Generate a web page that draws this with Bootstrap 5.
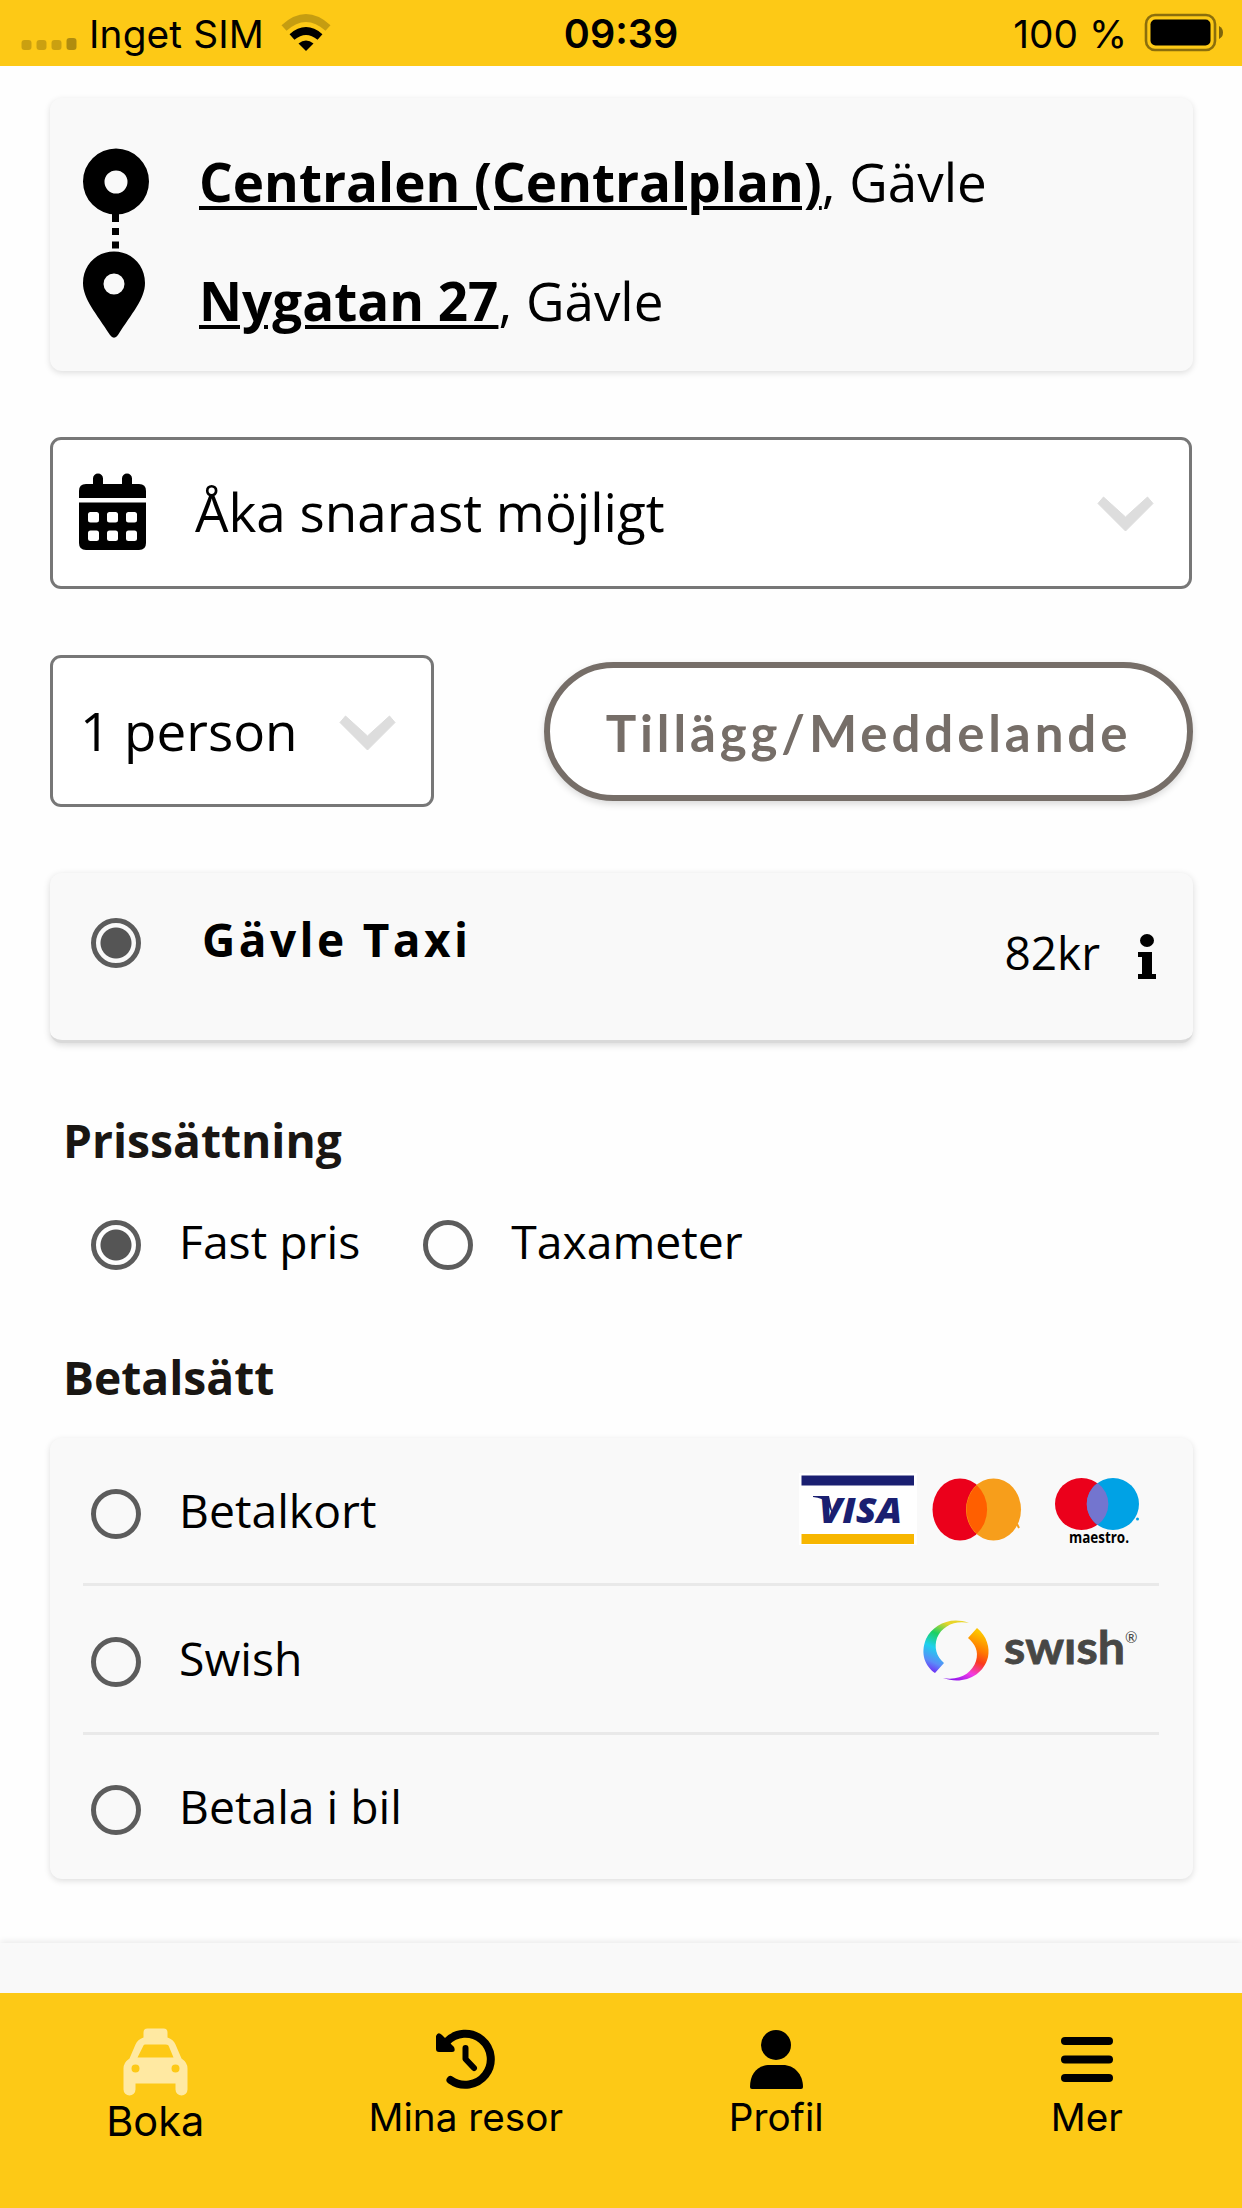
<!DOCTYPE html>
<html lang="sv">
<head>
<meta charset="utf-8">
<meta name="viewport" content="width=device-width, initial-scale=1">
<title>Boka taxi</title>
<link href="https://cdn.jsdelivr.net/npm/bootstrap@5.3.0/dist/css/bootstrap.min.css" rel="stylesheet">
<style>
  :root { --brand: #fdc916; --panel: #f9f9f9; }
  body { font-family: "Open Sans", sans-serif; color: #000; background: #fefefe; width: 1242px; height: 2208px; overflow: hidden; }
  svg { display: block; flex: none; overflow: visible; }
  .ui { font-family: Inter, sans-serif; }
  .statusbar { height: 66px; background: var(--brand); font-size: 38.8px; line-height: 66px; padding: 2px 18px 0 21px; }
  .statusbar svg { margin-top: -2px; }
  .statusbar .clock { font-weight: 600; font-size: 39.5px; margin-right: 3px; }
  .sim { margin-left: 12px; letter-spacing: .15px; }
  .sym { margin-left: 17px; }
  .side { flex: 1 1 0; }
  .shell { padding: 32px 49px 0 50px; }
  .panel { background: var(--panel); border-radius: 12px; box-shadow: 0 2px 6px rgba(0,0,0,.13); }
  .route { height: 273px; padding: 50px 33px 0; margin-bottom: 66px; }
  .stops { padding-top: 4px; margin-left: 49px; font-size: 53px; line-height: 60px; }
  .stops div + div { margin-top: 59px; }
  .stops a { color: #000; font-weight: 700; text-decoration-thickness: 4px; text-underline-offset: 4px; }
  .picker { border: 3px solid #777; border-radius: 11px; height: 152px; background: #fff; font-size: 53px; line-height: 60px; white-space: nowrap; }
  .picker .chev { margin-top: 3px; }
  .when { padding: 0 36px 2px 26px; margin: 0 1px 66px 0; }
  .when .txt { margin-left: 49px; }
  .persons { width: 384px; padding: 0 36px 0 27px; }
  .extras { width: 649px; height: 139px; border: 6px solid #766e68; border-radius: 70px; color: #766e68; background: #fff; font: 700 51px/60px Lato, sans-serif; letter-spacing: 3.9px; padding: 3px 0 0; box-shadow: 0 3px 7px rgba(0,0,0,.15); }
  .company { height: 170px; margin-top: 66px; padding: 45px 36px 0 41px; border-bottom: 3px solid #d9d9d9; box-shadow: 0 2px 7px rgba(0,0,0,.15); }
  .company .cname { font-weight: 700; font-size: 46px; line-height: 50px; letter-spacing: 3.4px; margin: -4px 0 0 61px; }
  .fare { font-size: 46px; line-height: 50px; margin-top: 9px; }
  .fare svg { margin: 7px 0 0 37px; }
  .form-check-input.pick { width: 50px; height: 50px; margin: 0; border: 5px solid #5c5c5c; background-color: transparent; flex: none; }
  .form-check-input.pick:checked { background-color: transparent; background-image: radial-gradient(circle, #555 15px, transparent 16px); background-size: 100%; background-origin: border-box; }
  .heading { font-size: 46.2px; font-weight: 700; line-height: 50px; color: #191613; margin: 0 0 0 13px; }
  .h-price { margin-top: 73px; }
  .h-pay { margin-top: 80px; }
  .opt { font-size: 46.3px; line-height: 50px; }
  .opt span { margin-left: 38px; padding-bottom: 6px; }
  .opt + .opt { margin-left: 63px; }
  .pricing { margin: 51px 0 0 41px; }
  .methods { padding: 0 34px 0 33px; height: 441px; margin-top: 35px; }
  .method { padding: 6px 20px 0 8px; height: 148px; border-bottom: 3px solid #e9e9e9; }
  .method + .method { height: 149px; }
  .method:last-child { border: 0; height: 144px; }
  .footband { height: 50px; margin-top: 64px; background: var(--panel); box-shadow: 0 -2px 6px rgba(0,0,0,.08); }
  .tabs { height: 215px; background: var(--brand); padding-top: 35px; }
  .tabs a { color: #000; text-decoration: none; font-size: 38.7px; line-height: 44px; flex: 1 1 0; }
  .tabs .ico { height: 67px; display: flex; align-items: flex-start; }
  .tabs .now { font-size: 41.5px; margin-top: 4px; }
</style>
</head>
<body>
<header class="statusbar ui d-flex align-items-center">
  <div class="side d-flex align-items-center">
    <svg width="56" height="66" viewBox="0 0 56 66"><g fill="#000" fill-opacity=".2"><rect x=".5" y="40" width="10" height="10" rx="3"/><rect x="15.500" y="40" width="10" height="10" rx="3"/><rect x="30.500" y="40" width="10" height="10" rx="3"/><rect x="45.500" y="38" width="10" height="12" rx="3" fill-opacity=".3"/></g></svg>
    <span class="sim">Inget SIM</span>
    <svg class="sym" width="50" height="66" viewBox="0 0 50 66"><path d="M3 28Q25 8 47 28" fill="none" stroke="#000" stroke-opacity=".22" stroke-width="7.500"/><path d="M11 37Q25 25 39 37" fill="none" stroke="#000" stroke-width="7.500"/><path d="M17.500 43.500Q25 37.500 32.500 43.500L25 51Z"/></svg>
  </div>
  <span class="clock">09:39</span>
  <div class="side d-flex align-items-center justify-content-end">
    <span>100 %</span>
    <svg class="sym" width="80" height="66" viewBox="0 0 80 66"><rect x="2" y="15" width="69" height="35" rx="9" fill="none" stroke="#000" stroke-opacity=".45" stroke-width="2.600"/><rect x="6.500" y="19.500" width="60" height="26" rx="5"/><path d="M75 26q4 2 4 6.500t-4 6.500z" fill-opacity=".5"/></svg>
  </div>
</header>
<main class="shell">
  <section class="panel route d-flex">
    <svg width="67" height="190" viewBox="0.5 0 67 190"><path fill-rule="evenodd" d="M33.500.5a33 33 0 1 0 0 66a33 33 0 1 0 0-66zM33.500 22.500a11.500 11.500 0 1 1 0 23a11.500 11.500 0 1 1 0-23z"/><path d="M29.500 66h7v8h-7zM29.500 80h7v7h-7zM29.500 93.500h7v7h-7z"/><path fill-rule="evenodd" d="M31.500 103.500C14 103.500.5 117 .5 135c0 16 13 30 27 52q4 5.500 8 0c14-22 27-36 27-52c0-18-13.500-31.500-31-31.500zM31.500 125.500a10.500 10.500 0 1 1 0 21a10.500 10.500 0 1 1 0-21z"/></svg>
    <div class="stops text-nowrap"><div><a href="#">Centralen (Centralplan)</a>, Gävle</div><div><a href="#">Nygatan 27</a>, Gävle</div></div>
  </section>
  <section class="picker when d-flex align-items-center">
    <svg width="67" height="76" viewBox="0 0 67 76"><path d="M0 24V17q0-7 7-7h7V4.500a5 5 0 0 1 10 0V10h19V4.500a5 5 0 0 1 10 0V10h7q7 0 7 7v7z"/><path fill-rule="evenodd" d="M0 28.500h67V69q0 7-7 7H7q-7 0-7-7zM11.500 38a2.500 2.500 0 0 0-2.500 2.500v5.500a2.500 2.500 0 0 0 2.500 2.500h6a2.500 2.500 0 0 0 2.500-2.500v-5.500a2.500 2.500 0 0 0-2.500-2.500zM30.500 38a2.500 2.500 0 0 0-2.500 2.500v5.500a2.500 2.500 0 0 0 2.500 2.500h6a2.500 2.500 0 0 0 2.500-2.500v-5.500a2.500 2.500 0 0 0-2.500-2.500zM49.500 38a2.500 2.500 0 0 0-2.500 2.500v5.500a2.500 2.500 0 0 0 2.500 2.500h6a2.500 2.500 0 0 0 2.500-2.500v-5.500a2.500 2.500 0 0 0-2.500-2.500zM11.500 56.500a2.500 2.500 0 0 0-2.500 2.500v5.500a2.500 2.500 0 0 0 2.500 2.500h6a2.500 2.500 0 0 0 2.500-2.500v-5.500a2.500 2.500 0 0 0-2.500-2.500zM30.500 56.500a2.500 2.500 0 0 0-2.500 2.500v5.500a2.500 2.500 0 0 0 2.500 2.500h6a2.500 2.500 0 0 0 2.500-2.500v-5.500a2.500 2.500 0 0 0-2.500-2.500zM49.500 56.500a2.500 2.500 0 0 0-2.500 2.500v5.500a2.500 2.500 0 0 0 2.500 2.500h6a2.500 2.500 0 0 0 2.500-2.500v-5.500a2.500 2.500 0 0 0-2.500-2.500z"/></svg>
    <span class="txt">Åka snarast möjligt</span>
    <svg class="chev ms-auto" width="55" height="34" viewBox="0 0 55 34"><path d="M5.500 0L27.500 20L49.500 0L55 6.500L27.500 34L0 6.500Z" fill="#ddd" stroke="#ddd" stroke-linejoin="round"/></svg>
  </section>
  <section class="d-flex justify-content-between align-items-center">
    <div class="picker persons d-flex align-items-center"><span class="txt">1 person</span><svg class="chev ms-auto" width="55" height="34" viewBox="0 0 55 34"><path d="M5.500 0L27.500 20L49.500 0L55 6.500L27.500 34L0 6.500Z" fill="#ddd" stroke="#ddd" stroke-linejoin="round"/></svg></div>
    <button class="btn extras" type="button">Tillägg/Meddelande</button>
  </section>
  <section class="panel company d-flex align-items-start">
    <input class="form-check-input pick" type="radio" name="company" checked>
    <span class="cname">Gävle Taxi</span>
    <div class="fare ms-auto d-flex align-items-start"><span>82kr</span><svg width="20" height="45" viewBox="0 0 20 45"><ellipse cx="10" cy="6.500" rx="7" ry="6.500"/><path d="M1 18h14v22h4v5H1v-5h4V23H1z"/></svg></div>
  </section>
  <h2 class="heading h-price">Prissättning</h2>
  <div class="pricing d-flex">
    <label class="opt d-flex align-items-center"><input class="form-check-input pick" type="radio" name="price" checked><span>Fast pris</span></label>
    <label class="opt d-flex align-items-center"><input class="form-check-input pick" type="radio" name="price"><span>Taxameter</span></label>
  </div>
  <h2 class="heading h-pay">Betalsätt</h2>
  <section class="panel methods">
    <div class="method d-flex align-items-center justify-content-between">
      <label class="opt d-flex align-items-center"><input class="form-check-input pick" type="radio" name="pay"><span>Betalkort</span></label>
      <svg width="341" height="72" viewBox="798 1478 341 72" font-family="Open Sans, sans-serif"><path fill="#fff" d="M799 1473h118v72H799z"/><path fill="#1a1f71" d="M801.500 1475.500h112.500v10H801.500z"/><path fill="#f7b600" d="M801.500 1534h112.500v10H801.500z"/><path fill="#1a1f71" d="M813 1496h16l4 19l-6-12q-4-5-14-6z"/><text x="819" y="1523" font-size="36" font-weight="800" font-style="italic" fill="#1a1f71" textLength="83" lengthAdjust="spacingAndGlyphs">VISA</text><ellipse cx="960" cy="1509.500" rx="27.500" ry="31" fill="#eb001b"/><ellipse cx="993.500" cy="1509.500" rx="27.500" ry="31" fill="#f79e1b"/><path d="M976.800 1485.300a27.500 31 0 0 1 0 48.400a27.500 31 0 0 1 0-48.400z" fill="#ff5f00"/><path d="M1017 1524l2 4" stroke="#f79e1b" stroke-width="2"/><ellipse cx="1081.500" cy="1504" rx="26.500" ry="26" fill="#eb001b"/><ellipse cx="1113" cy="1504" rx="26" ry="26" fill="#00a2e5"/><path d="M1097.500 1483a26.500 26 0 0 1 0 42a26.500 26 0 0 1 0-42z" fill="#7375cf"/><circle cx="1137.500" cy="1519" r="1.500" fill="#00a2e5"/><text x="1069" y="1543" font-size="16" font-weight="700" textLength="60" lengthAdjust="spacingAndGlyphs">maestro.</text></svg>
    </div>
    <div class="method d-flex align-items-center justify-content-between">
      <label class="opt d-flex align-items-center"><input class="form-check-input pick" type="radio" name="pay"><span>Swish</span></label>
      <svg width="217" height="62" viewBox="922 1632 217 62" font-family="Lato, sans-serif"><defs><linearGradient id="sl" x1="0" y1="1" x2=".4" y2="0"><stop offset="0" stop-color="#7a00f5"/><stop offset=".25" stop-color="#5a8cf8"/><stop offset=".5" stop-color="#1fd0ee"/><stop offset=".75" stop-color="#1bd062"/><stop offset="1" stop-color="#e8d52a"/></linearGradient><linearGradient id="sr" x1=".6" y1="0" x2=".2" y2="1"><stop offset="0" stop-color="#fdc500"/><stop offset=".3" stop-color="#ff7a00"/><stop offset=".5" stop-color="#fa3a1c"/><stop offset=".75" stop-color="#f23be6"/><stop offset="1" stop-color="#8a14ee"/></linearGradient></defs><path fill="url(#sl)" d="M969 1624C950 1617 933 1626 926 1640C920 1655 925 1667 935 1674L944 1664C936 1657 934 1648 937 1639C942 1627 955 1621 969 1624Z"/><path fill="url(#sr)" d="M977 1629C987 1637 990 1649 988 1658C983 1678 962 1686 943 1679C960 1682 972 1674 976 1662C979 1652 975 1645 968 1639Z"/><text x="1004" y="1665" font-size="46" font-weight="700" fill="#474745" stroke="#474745" stroke-width=".8" textLength="121" lengthAdjust="spacingAndGlyphs">swısh</text><text x="1125" y="1644" font-size="15" fill="#474745">®</text></svg>
    </div>
    <div class="method d-flex align-items-center"><label class="opt d-flex align-items-center"><input class="form-check-input pick" type="radio" name="pay"><span>Betala i bil</span></label></div>
  </section>
</main>
<div class="footband"></div>
<nav class="tabs ui d-flex text-center">
  <a href="#" class="d-flex flex-column align-items-center"><div class="ico"><svg width="64" height="65" viewBox="-.5 -.5 64 65"><path fill="#ffe9a2" fill-rule="evenodd" d="M20 9V4q0-4 4-4h16q4 0 4 4v5q6 2 8 7l6 14q6 4 6 10v21a6 6 0 0 1-12 0v-6H12v6a6 6 0 0 1-12 0V40q0-6 6-10l6-14q2-5 8-7zM20 17L14 29h36L45 17q-1-1-3-1H22q-2 0-2 1zM12 36a4 4 0 1 0 0 8a4 4 0 1 0 0-8zM52 36a4 4 0 1 0 0 8a4 4 0 1 0 0-8z"/></svg></div><span class="now">Boka</span></a>
  <a href="#" class="d-flex flex-column align-items-center"><div class="ico"><svg width="60" height="60" viewBox="0 -1 60 60"><path d="M10.500 13A25.500 25.500 0 1 1 14.500 51" fill="none" stroke="#000" stroke-width="8" stroke-linecap="round"/><path d="M0 7Q2 2 6 6L18 18Q20 23 16 23H3Q0 23 0 20z"/><path d="M29.500 19v11L38 39" fill="none" stroke="#000" stroke-width="6" stroke-linecap="round" stroke-linejoin="round"/></svg></div><span>Mina resor</span></a>
  <a href="#" class="d-flex flex-column align-items-center"><div class="ico"><svg width="53" height="60" viewBox="0 0 53 60"><circle cx="26" cy="17" r="15"/><path d="M0 59C0 45 8 37 20 37H33C44 37 53 46 53 59q0 2-2 2H2q-2 0-2-2z"/></svg></div><span>Profil</span></a>
  <a href="#" class="d-flex flex-column align-items-center"><div class="ico"><svg width="52" height="60" viewBox="0 0 52 60"><g><rect y="9" width="52" height="8" rx="4"/><rect y="27.500" width="52" height="8" rx="4"/><rect y="46" width="52" height="8" rx="4"/></g></svg></div><span>Mer</span></a>
</nav>
<script src="https://cdn.jsdelivr.net/npm/bootstrap@5.3.0/dist/js/bootstrap.bundle.min.js"></script>
</body>
</html>
